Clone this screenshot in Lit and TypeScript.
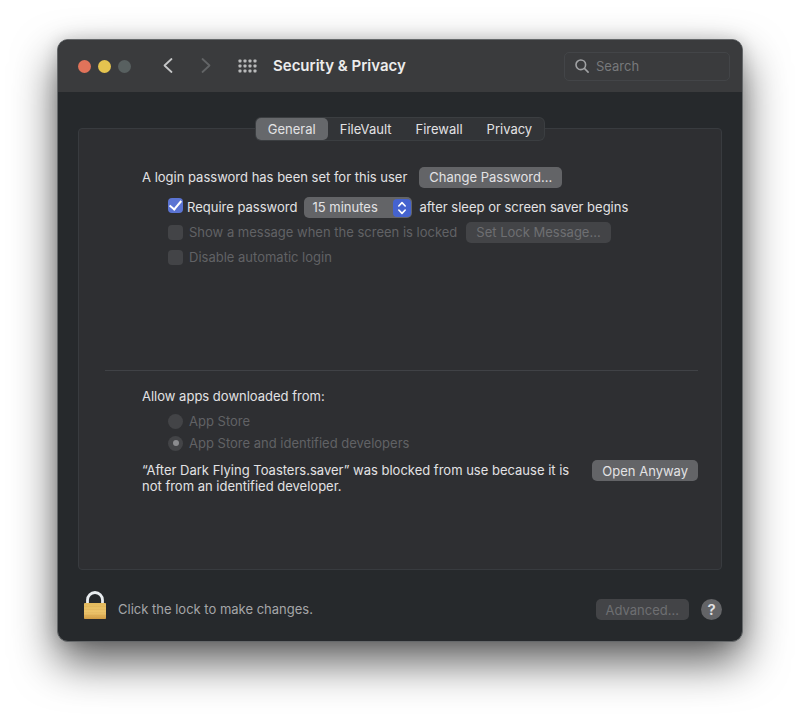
import { LitElement, html, svg, css } from "lit";
import { customElement, state } from "lit/decorators.js";
import { classMap } from "lit/directives/class-map.js";

const TABS = ["General", "FileVault", "Firewall", "Privacy"];

@customElement("app-root")
export class AppRoot extends LitElement {
  @state() private tab = "General";

  static styles = css`
    :host {
      display: block;
      box-sizing: border-box;
      min-height: 100vh;
      padding: 39px 57px 76px;
      background: #fff;
      color: #e2e2e4;
      font: 13px/16px Inter, "Liberation Sans", sans-serif;
      overflow: hidden;
    }
    * {
      box-sizing: border-box;
    }
    button,
    input,
    select {
      font: inherit;
      color: inherit;
      margin: 0;
    }
    .window {
      border: 1px solid #65686a;
      border-radius: 11px;
      background: #26292c;
      box-shadow: 0 20px 44px rgba(0, 0, 0, 0.64), 0 0 16px rgba(0, 0, 0, 0.14);
    }
    .toolbar {
      display: flex;
      align-items: center;
      height: 52px;
      padding: 0 12px 0 20px;
      border-radius: 10px 10px 0 0;
      background: #3a3b3d;
    }
    .lights {
      display: flex;
      gap: 7px;
      margin-right: 31px;
    }
    .light {
      width: 13px;
      height: 13px;
      padding: 0;
      border: 0;
      border-radius: 50%;
    }
    .close {
      background: #e1735a;
    }
    .minimise {
      background: #e5c44f;
    }
    .zoom {
      background: #586060;
    }
    .icon {
      display: block;
      padding: 0;
      border: 0;
      background: none;
    }
    .icon svg,
    .search svg,
    .lock svg {
      display: block;
    }
    .forward {
      margin: 0 26px 0 26px;
    }
    h1 {
      flex: 1;
      margin: 0 0 0 15px;
      font-size: 15px;
      line-height: 20px;
      font-weight: 600;
      color: #ececec;
    }
    .search {
      display: flex;
      align-items: center;
      gap: 7px;
      width: 166px;
      height: 29px;
      padding: 0 10px;
      border: 1px solid #434548;
      border-radius: 5px;
    }
    .search input {
      flex: 1;
      min-width: 0;
      padding: 0;
      border: 0;
      outline: 0;
      background: none;
    }
    .search input::placeholder {
      color: #77797b;
      opacity: 1;
    }
    .content {
      display: flex;
      flex-direction: column;
      padding: 26px 20px 21px;
    }
    .tabs {
      position: relative;
      display: flex;
      align-self: center;
      height: 22px;
      margin-bottom: -12px;
      border-radius: 5px;
      background: #323437;
      box-shadow: 0 0 0 1px #3b3e41;
    }
    .tab {
      padding: 0 12px;
      border: 0;
      border-radius: 5px;
      background: none;
    }
    .selected {
      background: #66686b;
    }
    .panel {
      padding: 38px 23px 75px 63px;
      border: 1px solid #383b3f;
      border-radius: 4px;
      background: #2e2f32;
    }
    .row {
      display: flex;
      align-items: center;
      height: 20px;
      margin-bottom: 5px;
    }
    .lead {
      gap: 12px;
      margin-bottom: 10px;
    }
    .indent {
      padding-left: 26px;
    }
    .choice {
      display: flex;
      align-items: center;
      gap: 4px;
    }
    .off {
      color: #616265;
    }
    .off .choice {
      gap: 6px;
    }
    .push {
      height: 21px;
      padding: 0 10px;
      border: 0;
      border-radius: 5px;
      background: #636467;
      white-space: nowrap;
    }
    .push:disabled {
      background: #434447;
      color: #6e6f72;
    }
    .after-label {
      margin-left: 9px;
    }
    input[type="checkbox"],
    input[type="radio"] {
      appearance: none;
      display: grid;
      place-items: center;
      width: 15px;
      height: 15px;
      background: #434447;
    }
    input[type="checkbox"] {
      border-radius: 4px;
    }
    input[type="radio"] {
      border-radius: 50%;
    }
    input[type="checkbox"]:checked {
      margin-bottom: 4px;
      background: #5b74d3;
    }
    input[type="checkbox"]:checked::before {
      content: "";
      width: 5px;
      height: 10px;
      margin-bottom: 3px;
      border: solid #fff;
      border-width: 0 2px 2px 0;
      transform: rotate(40deg);
    }
    input[type="radio"]:checked::before {
      content: "";
      width: 6px;
      height: 6px;
      border-radius: 50%;
      background: #8b8c8f;
    }
    .popup {
      position: relative;
      width: 108px;
      margin: 0 7px;
    }
    .popup select {
      appearance: none;
      display: block;
      width: 100%;
      height: 21px;
      padding: 0 20px 0 8px;
      border: 0;
      border-radius: 5px;
      background: #636467;
    }
    .popup svg {
      position: absolute;
      top: 2px;
      right: 1px;
      pointer-events: none;
    }
    hr {
      height: 1px;
      margin: 103px 0 15px -37px;
      border: 0;
      background: #404246;
    }
    .choices {
      margin: 0;
      padding: 0;
      border: 0;
    }
    .close-row {
      margin-bottom: 2px;
    }
    .blocked {
      display: flex;
      align-items: flex-start;
      justify-content: space-between;
      gap: 16px;
      margin-top: 5px;
    }
    .blocked p {
      max-width: 436px;
      margin: 2px 0 0;
    }
    .footer {
      display: flex;
      align-items: flex-end;
      margin-top: 20px;
      padding-left: 5px;
    }
    .lock {
      padding: 0;
      border: 0;
      background: none;
    }
    .footer p {
      flex: 1;
      margin: 0 0 3px 11px;
      color: #a5a6a8;
    }
    .help {
      width: 21px;
      height: 21px;
      margin-left: 12px;
      padding: 0;
      border: 0;
      border-radius: 50%;
      background: #636467;
      font-size: 15px;
      font-weight: 600;
    }
  `;

  render() {
    return html`
      <main class="window">
        <header class="toolbar">
          <div class="lights">
            <button class="light close" aria-label="Close"></button>
            <button class="light minimise" aria-label="Minimise"></button>
            <button class="light zoom" aria-label="Zoom" disabled></button>
          </div>
          <button class="icon" aria-label="Back">
            <svg width="12" height="18" viewBox="0 0 12 18" fill="none" stroke="#c5c6c7" stroke-width="1.8" stroke-linecap="round" stroke-linejoin="round"><path d="M9.5 2 2.5 8.500l7 6.500" /></svg>
          </button>
          <button class="icon forward" aria-label="Forward" disabled>
            <svg width="12" height="18" viewBox="0 0 12 18" fill="none" stroke="#626466" stroke-width="1.8" stroke-linecap="round" stroke-linejoin="round"><path d="M2.5 2 9.5 8.500l-7 6.500" /></svg>
          </button>
          <button class="icon" aria-label="Show all">
            <svg width="20" height="14" viewBox="0 0 20 14" fill="#b9babb">
              ${[0, 5, 10, 15].map((x) =>
                [0, 5, 10].map((y) => svg`<rect x=${x + 0.5} y=${y + 0.5} width="3" height="3" rx="0.8" />`)
              )}
            </svg>
          </button>
          <h1>Security &amp; Privacy</h1>
          <label class="search">
            <svg width="14" height="14" viewBox="0 0 14 14" fill="none" stroke="#a1a2a4" stroke-width="1.6" stroke-linecap="round"><circle cx="5.8" cy="5.8" r="4.8" /><path d="m9.4 9.4 3.7 3.7" /></svg>
            <input type="search" placeholder="Search" aria-label="Search" />
          </label>
        </header>

        <div class="content">
          <div class="tabs" role="tablist">
            ${TABS.map(
              (t) => html`<button
                role="tab"
                class=${classMap({ tab: true, selected: t === this.tab })}
                aria-selected=${t === this.tab ? "true" : "false"}
                @click=${() => (this.tab = t)}
              >${t}</button>`
            )}
          </div>

          <section class="panel">
            <div class="row lead">
              <span>A login password has been set for this user</span>
              <button class="push">Change Password…</button>
            </div>
            <div class="row indent">
              <label class="choice"><input type="checkbox" checked />Require password</label>
              <div class="popup">
                <select id="delay" aria-label="Password delay">
                  <option>15 minutes</option>
                </select>
                <svg width="18" height="18" viewBox="0 0 18 18"><rect width="18" height="18" rx="4" fill="#4563cf" /><path d="M5.8 7 9 3.6 12.2 7M5.8 11 9 14.4 12.2 11" fill="none" stroke="#fff" stroke-width="1.6" stroke-linecap="round" stroke-linejoin="round" /></svg>
              </div>
              <label for="delay">after sleep or screen saver begins</label>
            </div>
            <div class="row indent off">
              <label class="choice"><input type="checkbox" disabled />Show a message when the screen is locked</label>
              <button class="push after-label" disabled>Set Lock Message…</button>
            </div>
            <div class="row indent off">
              <label class="choice"><input type="checkbox" disabled />Disable automatic login</label>
            </div>

            <hr />

            <fieldset class="choices" aria-labelledby="sources">
              <div class="row" id="sources">Allow apps downloaded from:</div>
              <div class="row indent off close-row">
                <label class="choice"><input type="radio" name="source" disabled />App Store</label>
              </div>
              <div class="row indent off close-row">
                <label class="choice"><input type="radio" name="source" checked disabled />App Store and identified developers</label>
              </div>
            </fieldset>
            <div class="blocked">
              <p>“After Dark Flying Toasters.saver” was blocked from use because it is not from an identified developer.</p>
              <button class="push">Open Anyway</button>
            </div>
          </section>

          <footer class="footer">
            <button class="lock" aria-label="Unlock">
              <svg width="24" height="30" viewBox="0 0 24 30">
                <defs>
                  <linearGradient id="brass" x1="0" y1="0" x2="0" y2="1"><stop offset="0" stop-color="#e3b95c" /><stop offset="0.6" stop-color="#edc56c" /><stop offset="1" stop-color="#cf9a42" /></linearGradient>
                </defs>
                <path d="M4.5 15V10a7.500 7.500 0 0 1 15 0V15" fill="none" stroke="#e9edf0" stroke-width="2.8" />
                <rect x="1" y="13" width="22" height="16" rx="0.8" fill="url(#brass)" />
                <path d="M1 16.5h22M1 19.5h22M1 22.5h22M1 25.5h22" stroke="#c99a48" stroke-width="0.6" opacity="0.3" />
              </svg>
            </button>
            <p>Click the lock to make changes.</p>
            <button class="push" disabled>Advanced…</button>
            <button class="help" aria-label="Help">?</button>
          </footer>
        </div>
      </main>
    `;
  }
}
